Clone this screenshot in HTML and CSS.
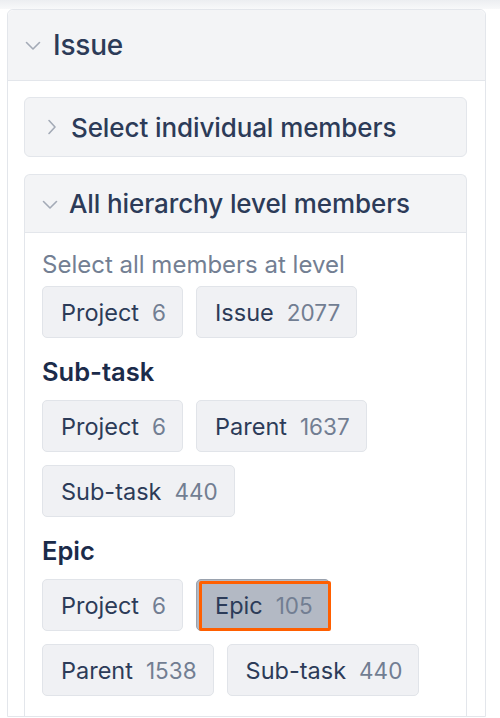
FILE: index.html
```html
<!DOCTYPE html>
<html>
<head>
<meta charset="utf-8">
<link rel="stylesheet" href="styles.css">
</head>
<body>
<div class="page">
  <div class="panel">
    <div class="panel-head">
      <svg class="chev-down" width="16" height="10" viewBox="0 0 16 10"><path d="M1.5 1.5 L8 8 L14.5 1.5" fill="none" stroke="#a3aab6" stroke-width="1.6" stroke-linecap="round" stroke-linejoin="round"/></svg>
      <span class="panel-title">Issue</span>
    </div>
    <div class="panel-body">
      <div class="card">
        <div class="card-head">
          <svg class="chev-right" width="10" height="16" viewBox="0 0 10 16"><path d="M2 1.5 L8 8 L2 14.5" fill="none" stroke="#a3aab6" stroke-width="1.6" stroke-linecap="round" stroke-linejoin="round"/></svg>
          <span class="card-title">Select individual members</span>
        </div>
      </div>
      <div class="card open">
        <div class="card-head">
          <svg class="chev-down small" width="16" height="10" viewBox="0 0 16 10"><path d="M1.5 1.5 L8 8 L14.5 1.5" fill="none" stroke="#a3aab6" stroke-width="1.6" stroke-linecap="round" stroke-linejoin="round"/></svg>
          <span class="card-title">All hierarchy level members</span>
        </div>
        <div class="card-body">
          <div class="hint">Select all members at level</div>
          <div class="chips">
            <button class="chip"><span class="name">Project</span><span class="count">6</span></button>
            <button class="chip"><span class="name">Issue</span><span class="count">2077</span></button>
          </div>
          <div class="level">Sub-task</div>
          <div class="chips">
            <button class="chip"><span class="name">Project</span><span class="count">6</span></button>
            <button class="chip"><span class="name">Parent</span><span class="count">1637</span></button>
            <button class="chip"><span class="name">Sub-task</span><span class="count">440</span></button>
          </div>
          <div class="level">Epic</div>
          <div class="chips">
            <button class="chip"><span class="name">Project</span><span class="count">6</span></button>
            <button class="chip selected"><span class="name">Epic</span><span class="count">105</span></button>
            <button class="chip"><span class="name">Parent</span><span class="count">1538</span></button>
            <button class="chip"><span class="name">Sub-task</span><span class="count">440</span></button>
          </div>
        </div>
      </div>
    </div>
  </div>
</div>
</body>
</html>
```

FILE: styles.css
```css
* { box-sizing: border-box; }
html, body { margin: 0; padding: 0; }
body {
  background: #ffffff;
  font-family: Inter, "Noto Sans", sans-serif;
  color: #2c3a56;
  width: 500px;
  height: 718px;
  overflow: hidden;
}
.page {
  padding: 9px 14px 0 7px;
  background: linear-gradient(#eceef1 0px, #f8f9fa 9px, #ffffff 9px);
}
.panel {
  border: 1px solid #e3e6eb;
  border-radius: 6px 6px 0 0;
  background: #ffffff;
  width: 479px;
}
.panel-head {
  height: 71px;
  background: #f3f4f6;
  border-bottom: 1px solid #e3e6eb;
  border-radius: 6px 6px 0 0;
  display: flex;
  align-items: center;
  padding-left: 17px;
}
.chev-down { display: block; margin-right: 12px; margin-top: 2px; }
.panel-title {
  font-size: 28px;
  font-weight: 500;
  color: #2c3b58;
  letter-spacing: -0.2px;
}
.panel-body {
  padding: 16px 18px 0 16px;
  display: flex;
  flex-direction: column;
  gap: 17px;
}
.card {
  border: 1px solid #e3e6eb;
  border-radius: 6px;
  background: #f3f4f6;
}
.card.open { border-radius: 6px 6px 0 0; border-bottom: none; }
.card-head {
  height: 58px;
  display: flex;
  align-items: center;
  padding-left: 22px;
}
.card.open .card-head { border-bottom: 1px solid #e3e6eb; }
.chev-right { display: block; margin-right: 14px; }
.chev-down.small { margin-left: -5px; margin-right: 11px; }
.card-title {
  font-size: 26px;
  font-weight: 500;
  color: #2c3b58;
  letter-spacing: -0.1px;
}
.card-body {
  background: #ffffff;
  padding: 18px 16px 20px 17px;
}
.hint {
  font-size: 24px;
  color: #737f93;
  line-height: 28px;
  margin-bottom: 7px;
}
.chips {
  display: flex;
  flex-wrap: wrap;
  gap: 13px;
}
.chip {
  position: relative;
  height: 52px;
  display: inline-flex;
  align-items: center;
  gap: 13px;
  padding: 0 16px 0 18px;
  background: #f0f1f4;
  border: 1.5px solid #e1e4e9;
  border-radius: 5px;
  font-family: Inter, "Noto Sans", sans-serif;
  cursor: pointer;
}
.chip .name { color: #2c3b58; font-size: 23.5px; }
.chip .count { color: #727e92; font-size: 22.5px; }
.chip.selected {
  background: #b3b9c4;
  border-color: #9aa2ae;
}
.chip.selected::after {
  content: "";
  position: absolute;
  top: 1px;
  left: 2px;
  right: -2px;
  bottom: -1px;
  border: 3px solid #ff5f00;
  border-radius: 2px;
}
.level {
  font-size: 25.5px;
  font-weight: 600;
  color: #1b2b4a;
  line-height: 30px;
  margin: 19px 0 13px;
}
```
